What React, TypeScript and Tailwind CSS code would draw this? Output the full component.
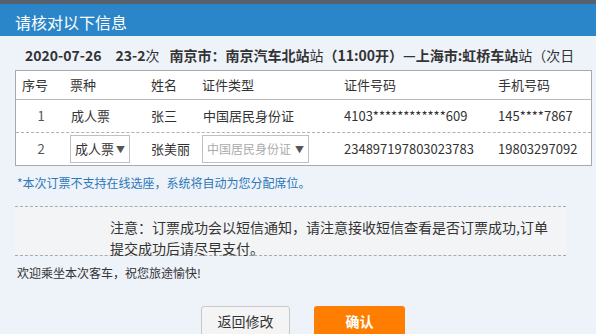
import { useState } from "react";

type Passenger = {
  no: number;
  ticket: string;
  name: string;
  idType: string;
  idNo: string;
  phone: string;
  editable?: boolean;
};

const passengers: Passenger[] = [
  { no: 1, ticket: "成人票", name: "张三", idType: "中国居民身份证", idNo: "4103************609", phone: "145****7867" },
  { no: 2, ticket: "成人票", name: "张美丽", idType: "中国居民身份证", idNo: "234897197803023783", phone: "19803297092", editable: true },
];

const FONT = { fontFamily: '"Microsoft YaHei", "Noto Sans CJK SC", "Liberation Sans", sans-serif' };

function Caret() {
  return <span className="ml-auto text-[9px] leading-none text-[#555]">▼</span>;
}

export default function App() {
  const [ticket, setTicket] = useState("成人票");

  return (
    <div className="h-[334px] w-[596px] overflow-hidden bg-[#eef2f9] text-[#333]" style={FONT}>
      {/* Window title bar */}
      <div className="h-[4px] bg-[#56616d]" />
      <div className="flex h-[32px] items-center bg-[#2a86c8] pl-[15px] pt-[3px] text-[16px] leading-[20px] text-white">
        请核对以下信息
      </div>

      {/* Trip line */}
      <div className="mt-[9px] flex h-[20px] items-center whitespace-nowrap pl-[25px] text-[14px] leading-[20px]">
        <span className="font-bold">2020-07-26</span>
        <span className="ml-[14px] font-bold">23-2</span>
        <span>次</span>
        <span className="ml-[10px] font-bold">南京市：南京汽车北站</span>
        <span>站</span>
        <span className="font-bold">（11:00开）—上海市:虹桥车站</span>
        <span>站（次日</span>
      </div>

      {/* Passenger table */}
      <div className="mx-[15px] mt-[5px] w-[577px] border border-[#a9a9a9] bg-white text-[13px] leading-[18px]">
        <div className="flex h-[29px] items-center border-b border-[#b9b9b9]">
          <span className="w-[54px] pl-[6px]">序号</span>
          <span className="w-[81px]">票种</span>
          <span className="w-[51px]">姓名</span>
          <span className="w-[142px]">证件类型</span>
          <span className="w-[154px]">证件号码</span>
          <span>手机号码</span>
        </div>
        {passengers.map((p, i) => (
          <div
            key={p.no}
            className={`flex h-[32px] items-center ${i === 0 ? "h-[33px] border-b border-dashed border-[#b0b0b0]" : ""}`}
          >
            <span className="w-[54px] pr-[4px] text-center text-[#555]">{p.no}</span>
            <span className="w-[81px]">
              {p.editable ? (
                <button
                  type="button"
                  onClick={() => setTicket(ticket)}
                  className="flex h-[28px] w-[60px] items-center whitespace-nowrap border border-[#c0c0c0] bg-white px-[4px] text-[13px]"
                >
                  {ticket}
                  <Caret />
                </button>
              ) : (
                <span className="pl-[1px]">{p.ticket}</span>
              )}
            </span>
            <span className="w-[51px]">{p.name}</span>
            <span className="w-[142px]">
              {p.editable ? (
                <div className="flex h-[28px] w-[107px] items-center whitespace-nowrap border border-[#c0c0c0] bg-white px-[4px] text-[12px] text-[#aaa]">
                  {p.idType}
                  <Caret />
                </div>
              ) : (
                <span className="pl-[1px]">{p.idType}</span>
              )}
            </span>
            <span className="w-[154px]">{p.idNo}</span>
            <span>{p.phone}</span>
          </div>
        ))}
      </div>

      {/* Seat notice */}
      <div className="mt-[9px] h-[16px] pl-[17px] text-[12px] leading-[16px] text-[#2b78b8]">
        *本次订票不支持在线选座，系统将自动为您分配席位。
      </div>

      {/* SMS notice */}
      <div className="mx-[15px] mt-[15px] h-[50px] w-[551px] border-y border-dashed border-[#aaa] bg-[#f3f4f6] pl-[95px] pr-[10px] pt-[10px] text-[14px] leading-[21px]">
        注意：订票成功会以短信通知，请注意接收短信查看是否订票成功,订单提交成功后请尽早支付。
      </div>

      <div className="mt-[9px] h-[16px] pl-[17px] text-[12px] leading-[16px]">欢迎乘坐本次客车，祝您旅途愉快!</div>

      {/* Actions */}
      <div className="mt-[25px] flex gap-[24px] pl-[201px]">
        <button
          type="button"
          className="h-[30px] w-[89px] rounded-[3px] border border-[#c8c8c8] bg-[#f4f4f4] text-[14px] leading-[20px] text-[#333]"
        >
          返回修改
        </button>
        <button
          type="button"
          className="h-[30px] w-[91px] rounded-[3px] bg-[#ff7d00] text-[14px] font-bold leading-[20px] text-white"
        >
          确认
        </button>
      </div>
    </div>
  );
}
